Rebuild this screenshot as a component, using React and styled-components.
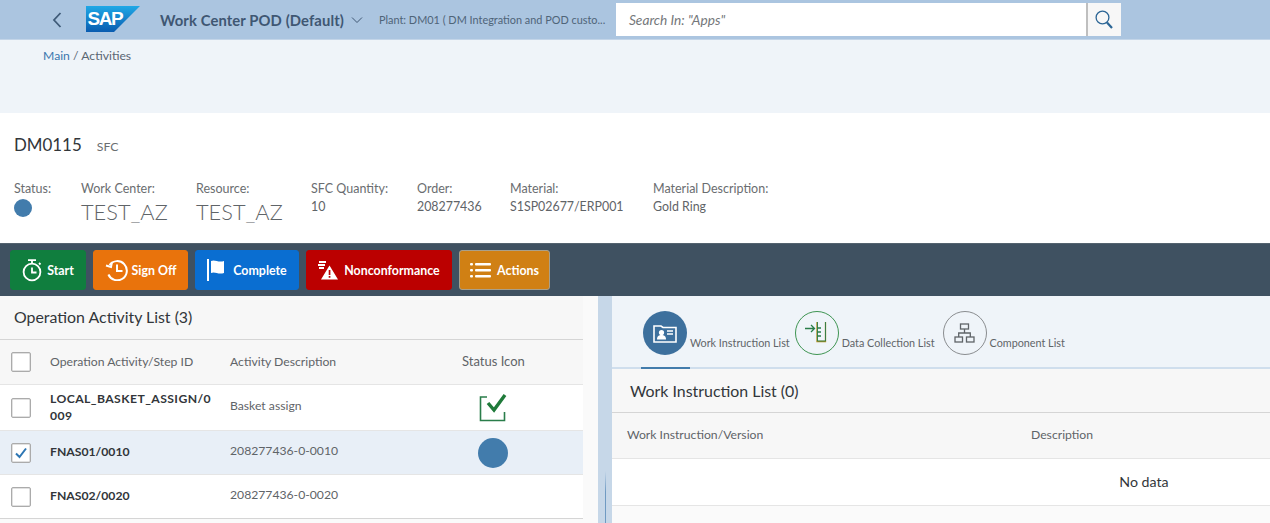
import React from "react";
import styled, { createGlobalStyle } from "styled-components";

const Global = createGlobalStyle`
  html, body { margin: 0; padding: 0; background: #fff; }
  body { font-family: "Lato", "Open Sans", Arial, sans-serif; color: #32363a; overflow: hidden; }
  * { box-sizing: border-box; }
`;
const Page = styled.div`width:1270px;height:523px;overflow:hidden;display:flex;flex-direction:column;`;

const Shell = styled.header`height:40px;flex:none;background:#abc5e0;border-bottom:1px solid #c3d5e8;display:flex;align-items:center;`;
const BackBtn = styled.div`width:16px;margin-left:52px;height:20px;display:flex;align-items:center;color:#3f5b78;`;
const LogoWrap = styled.div`margin-left:18px;width:54px;height:26px;display:flex;margin-top:-1px;`;
const ShellTitle = styled.div`margin-left:20px;font-size:14.8px;font-weight:700;color:#3f5773;white-space:nowrap;letter-spacing:.1px;`;
const Chevron = styled.div`margin-left:7px;width:12px;display:flex;color:#3f5773;`;
const Plant = styled.div`margin-left:16px;width:229px;font-size:10.9px;color:#4f6478;white-space:nowrap;`;
const Search = styled.div`margin-left:8px;display:flex;height:33px;margin-top:-1px;`;
const SearchInput = styled.div`width:470px;background:#fff;display:flex;align-items:center;padding-left:13px;font-size:13.7px;font-style:italic;color:#74777a;`;
const SearchBtn = styled.div`width:35px;background:#f7f7f7;border-left:2px solid #bfbfbf;display:flex;align-items:center;justify-content:center;color:#2b6595;`;

const Crumbs = styled.nav`height:73px;flex:none;background:#eff4f9;padding:7px 0 0 43px;font-size:12.2px;line-height:17px;color:#5a6673;`;
const CrumbLink = styled.span`color:#3a77ae;`;

const ObjectHeader = styled.section`height:130px;flex:none;background:#fff;padding:20px 0 0 14px;`;
const TitleRow = styled.div`display:flex;align-items:baseline;gap:15px;`;
const Title = styled.div`font-size:16.9px;line-height:24px;color:#32363a;`;
const Sub = styled.div`font-size:12.3px;color:#6a6d70;`;
const Attrs = styled.div`display:flex;margin-top:23px;`;
const Attr = styled.div`width:${p => p.$w}px;flex:none;`;
const Label = styled.div`font-size:12.5px;line-height:17px;color:#6a6d70;white-space:nowrap;`;
const Big = styled.div`font-size:21.8px;line-height:28px;font-weight:300;color:#5f6468;margin-top:1px;white-space:nowrap;`;
const Val = styled.div`font-size:12.4px;line-height:17px;color:#5f6468;margin-top:1px;white-space:nowrap;`;
const Dot = styled.div`width:${p => p.$s}px;height:${p => p.$s}px;border-radius:50%;background:#427cac;margin-top:${p => p.$mt || 0}px;`;

const Toolbar = styled.div`height:53px;flex:none;background:#3f5161;border-top:1px solid #54636f;display:flex;align-items:center;gap:7px;padding:0 0 1px 10px;`;
const Action = styled.div`height:40px;width:${p => p.$w}px;flex:none;background:${p => p.$bg};border-radius:3px;border:1px solid ${p => p.$line || p.$bg};color:#fff;font-size:12.4px;font-weight:700;display:flex;align-items:center;justify-content:center;gap:${p => p.$gap || 5}px;white-space:nowrap;padding-top:1px;`;

const Panes = styled.div`flex:1;display:flex;min-height:0;`;
const Left = styled.section`width:583px;flex:none;display:flex;flex-direction:column;background:#fff;`;
const Gutter = styled.div`width:15px;flex:none;background:#fafafa;`;
const Splitter = styled.div`width:14px;flex:none;background:#c6d7e8;display:flex;justify-content:center;padding-top:175px;`;
const SplitLine = styled.div`width:1px;height:52px;background:linear-gradient(#c6d7e8,#6f9ac2 40%,#6f9ac2);`;
const Right = styled.section`flex:1;display:flex;flex-direction:column;background:#fafafa;`;

const ListTitle = styled.div`height:44px;flex:none;background:#f7f7f7;border-bottom:1px solid #d5d5d5;padding:0 0 3px 14px;display:flex;align-items:center;font-size:15.9px;color:#32363a;`;
const Row = styled.div`height:${p => p.$h}px;flex:none;display:grid;grid-template-columns:50px 180px 232px 62px 1fr;align-items:center;background:${p => p.$bg || "#fff"};border-bottom:1px solid ${p => p.$line || "#e5e5e5"};`;
const CheckCell = styled.div`padding-left:11px;display:flex;`;
const Check = styled.div`width:20px;height:20px;background:#fff;border:1px solid #ababab;border-radius:2px;box-shadow:inset 0 0 0 .5px #c4c4c4;display:flex;align-items:center;justify-content:center;`;
const HeadCell = styled.div`font-size:${p => p.$c ? 13 : 12.2}px;color:#5f6468;white-space:nowrap;margin-top:-2px;text-align:${p => p.$c ? "center" : "left"};`;
const IdCell = styled.div`font-size:12.2px;line-height:17px;font-weight:700;color:#32363a;width:166px;word-break:break-all;letter-spacing:${p => p.$ls || 0}px;margin-top:-2px;`;
const TextCell = styled.div`font-size:12.2px;color:#5f6468;margin-top:${p => p.$mt || 0}px;`;
const IconCell = styled.div`display:flex;justify-content:center;`;
const Bottom = styled.div`flex:1;background:#fafafa;`;

const Tabs = styled.div`height:73px;flex:none;background:#eff4f9;border-bottom:2px solid #cfdeed;display:flex;padding-left:31px;`;
const Tab = styled.div`display:flex;align-items:flex-start;padding-top:15px;margin-right:${p => p.$mr}px;height:73px;position:relative;`;
const TabCircle = styled.div`width:44px;height:44px;border-radius:50%;flex:none;display:flex;align-items:center;justify-content:center;background:${p => p.$bg || "transparent"};border:${p => p.$bd ? `1px solid ${p.$bd}` : "none"};`;
const TabText = styled.div`margin:25px 0 0 3px;font-size:10.8px;line-height:14px;color:#5f6468;white-space:nowrap;`;
const TabBar = styled.div`position:absolute;left:-2px;width:49px;bottom:0;height:2px;background:#427cac;`;

const WiTitle = styled.div`height:44px;flex:none;background:#f7f7f7;border-bottom:1px solid #d5d5d5;padding-left:18px;display:flex;align-items:center;font-size:15.9px;color:#32363a;`;
const WiHead = styled.div`height:46px;flex:none;background:#f7f7f7;border-bottom:1px solid #e5e5e5;display:grid;grid-template-columns:404px 1fr;padding:0 0 2px 15px;align-items:center;font-size:12.2px;color:#5f6468;`;
const NoData = styled.div`height:47px;flex:none;background:#fff;border-bottom:1px solid #e5e5e5;display:flex;align-items:center;justify-content:center;padding:0 0 1px 406px;font-size:14.2px;color:#32363a;`;

const Logo = () => (
  <svg width="54" height="26" viewBox="0 0 54 26">
    <defs>
      <linearGradient id="sapg" x1="0" y1="0" x2="0" y2="1">
        <stop offset="0" stopColor="#1fa8e6" />
        <stop offset="1" stopColor="#0a5cb0" />
      </linearGradient>
    </defs>
    <path d="M0 0H54L28 26H0Z" fill="url(#sapg)" />
    <text x="1.5" y="19" fontFamily="'Liberation Sans',Arial,sans-serif" fontWeight="700" fontSize="19" letterSpacing="-1.4" fill="#fff">SAP</text>
  </svg>
);
const Stopwatch = () => (
  <svg width="20" height="24" viewBox="0 0 20 24" fill="none" stroke="#fff" strokeWidth="1.8">
    <circle cx="10" cy="14" r="8.4" />
    <path d="M6 2.2h8M10 2.2v3.4M10 9.5v5h4.5M17 5l1.5 1.5" />
  </svg>
);
const History = () => (
  <svg width="23" height="22" viewBox="0 0 23 22" fill="none" stroke="#fff" strokeWidth="2">
    <path d="M4.5 6A9.6 9.6 0 1 1 3.4 15.5" />
    <path d="M1 6.5l5 1.5 1-5" />
    <path d="M12 5.5v6.5h5.5" />
  </svg>
);
const Flag = () => (
  <svg width="18" height="22" viewBox="0 0 18 22" fill="#fff">
    <rect x="0" y="0" width="2" height="22" />
    <path d="M4 2c4-2 7 2 13 0v12c-6 2-9-2-13 0Z" />
  </svg>
);
const Nonconf = () => (
  <svg width="20" height="20" viewBox="0 0 20 20" fill="#fff">
    <rect x="1" y="1" width="7" height="2" />
    <rect x="0" y="4" width="7" height="2" />
    <rect x="1" y="7" width="5" height="2" />
    <path fillRule="evenodd" d="M11.5 5.5L20 19.5H3ZM10.7 10v5h1.7v-5ZM10.7 16v1.7h1.7V16Z" />
  </svg>
);
const ListIcon = () => (
  <svg width="21" height="16" viewBox="0 0 21 16" fill="#fff">
    <rect x="0" y="1" width="3" height="2.4" rx="1" />
    <rect x="5" y="1" width="16" height="2.4" rx="1" />
    <rect x="0" y="7" width="3" height="2.4" rx="1" />
    <rect x="5" y="7" width="16" height="2.4" rx="1" />
    <rect x="0" y="13" width="3" height="2.4" rx="1" />
    <rect x="5" y="13" width="16" height="2.4" rx="1" />
  </svg>
);
const Tick = ({ s = 14 }) => (
  <svg width={s} height={s} viewBox="0 0 14 14" fill="none" stroke="#2d76b4" strokeWidth="2">
    <path d="M2 7.5l3.5 3.5L12 2.5" />
  </svg>
);
const DoneIcon = () => (
  <svg width="28" height="28" viewBox="0 0 28 28" fill="none">
    <path d="M8 3H1.5v23.5h24V18" stroke="#2a7d4a" strokeWidth="1.6" />
    <path d="M9 9l6 7L26 1" stroke="#1f7a3a" strokeWidth="3.4" />
  </svg>
);
const WiIcon = () => (
  <svg width="24" height="20" viewBox="0 0 24 20" fill="none">
    <path d="M1 3h7l2 1.5h13V19H1Z" stroke="#fff" strokeWidth="1.6" />
    <circle cx="8.5" cy="9.5" r="2.6" fill="#fff" />
    <path d="M4 16.5c0-3.4 2-4.4 4.5-4.4s4.5 1 4.5 4.4Z" fill="#fff" />
    <path d="M14 8h6M14 11h6" stroke="#fff" strokeWidth="1.4" />
  </svg>
);
const DcIcon = () => (
  <svg width="24" height="24" viewBox="0 0 24 24" fill="none">
    <path d="M0 7.5h9M6 4l3.5 3.5L6 11" stroke="#2a7d4a" strokeWidth="1.3" />
    <path d="M12 1v19.5h8.5V1" stroke="#b08d1e" strokeWidth="1.3" />
    <path d="M12.5 1v19h8V1" stroke="#2a7d4a" strokeWidth=".9" />
    <path d="M12 7h4M12 11h4M12 15h4" stroke="#2a7d4a" strokeWidth="1.3" />
  </svg>
);
const CompIcon = () => (
  <svg width="21" height="21" viewBox="0 0 21 21" fill="none" stroke="#5f6468" strokeWidth="1.3">
    <rect x="6.5" y="1" width="8" height="5" />
    <rect x="1" y="14" width="7.5" height="5" />
    <rect x="12.5" y="14" width="7.5" height="5" />
    <path d="M10.5 6v4M4.7 14v-4h11.6v4" />
  </svg>
);

export default function App() {
  return (
    <Page>
      <Global />
      <Shell>
        <BackBtn>
          <svg width="10" height="16" viewBox="0 0 10 16" fill="none" stroke="currentColor" strokeWidth="1.8"><path d="M8.5 1L2 8l6.5 7" /></svg>
        </BackBtn>
        <LogoWrap><Logo /></LogoWrap>
        <ShellTitle>Work Center POD (Default)</ShellTitle>
        <Chevron>
          <svg width="12" height="8" viewBox="0 0 12 8" fill="none" stroke="currentColor" strokeWidth="1"><path d="M1 1.5l5 5 5-5" /></svg>
        </Chevron>
        <Plant>Plant: DM01 ( DM Integration and POD custo...</Plant>
        <Search>
          <SearchInput>Search In: "Apps"</SearchInput>
          <SearchBtn>
            <svg width="18" height="19" viewBox="0 0 18 19" fill="none" stroke="currentColor"><circle cx="7.5" cy="7.5" r="6.4" strokeWidth="1.3" /><path d="M12 12.5l5 5.5" strokeWidth="2.2" /></svg>
          </SearchBtn>
        </Search>
      </Shell>
      <Crumbs><CrumbLink>Main</CrumbLink> / Activities</Crumbs>
      <ObjectHeader>
        <TitleRow><Title>DM0115</Title><Sub>SFC</Sub></TitleRow>
        <Attrs>
          <Attr $w={67}><Label>Status:</Label><Dot $s={18} $mt={2} /></Attr>
          <Attr $w={115}><Label>Work Center:</Label><Big>TEST_AZ</Big></Attr>
          <Attr $w={115}><Label>Resource:</Label><Big>TEST_AZ</Big></Attr>
          <Attr $w={106}><Label>SFC Quantity:</Label><Val>10</Val></Attr>
          <Attr $w={93}><Label>Order:</Label><Val>208277436</Val></Attr>
          <Attr $w={143}><Label>Material:</Label><Val>S1SP02677/ERP001</Val></Attr>
          <Attr $w={130}><Label>Material Description:</Label><Val>Gold Ring</Val></Attr>
        </Attrs>
      </ObjectHeader>
      <Toolbar>
        <Action $w={76} $bg="#107e3e"><Stopwatch />Start</Action>
        <Action $w={95} $bg="#e9730c" $gap={4}><History />Sign Off</Action>
        <Action $w={104} $bg="#0a6ed1" $gap={8}><Flag />Complete</Action>
        <Action $w={146} $bg="#bb0000" $gap={6}><Nonconf />Nonconformance</Action>
        <Action $w={91} $bg="#d08014" $line="#a9a08a" $gap={6}><ListIcon />Actions</Action>
      </Toolbar>
      <Panes>
        <Left>
          <ListTitle>Operation Activity List (3)</ListTitle>
          <Row $h={45} $bg="#f7f7f7">
            <CheckCell><Check /></CheckCell>
            <HeadCell>Operation Activity/Step ID</HeadCell>
            <HeadCell>Activity Description</HeadCell>
            <HeadCell $c>Status Icon</HeadCell>
          </Row>
          <Row $h={46}>
            <CheckCell><Check /></CheckCell>
            <IdCell $ls={0.42}>LOCAL_BASKET_ASSIGN/0009</IdCell>
            <TextCell $mt={-4}>Basket assign</TextCell>
            <IconCell><DoneIcon /></IconCell>
          </Row>
          <Row $h={44} $bg="#e8eff7">
            <CheckCell><Check><Tick /></Check></CheckCell>
            <IdCell>FNAS01/0010</IdCell>
            <TextCell $mt={-5}>208277436-0-0010</TextCell>
            <IconCell><Dot $s={30} /></IconCell>
          </Row>
          <Row $h={44} $line="#d5d5d5">
            <CheckCell><Check /></CheckCell>
            <IdCell>FNAS02/0020</IdCell>
            <TextCell $mt={-5}>208277436-0-0020</TextCell>
          </Row>
          <Bottom />
        </Left>
        <Gutter />
        <Splitter><SplitLine /></Splitter>
        <Right>
          <Tabs>
            <Tab $mr={5}>
              <TabCircle $bg="#3d709d"><WiIcon /></TabCircle>
              <TabText>Work Instruction List</TabText>
              <TabBar />
            </Tab>
            <Tab $mr={8}>
              <TabCircle $bd="#3f9553"><DcIcon /></TabCircle>
              <TabText>Data Collection List</TabText>
            </Tab>
            <Tab $mr={0}>
              <TabCircle $bd="#8a8d90"><CompIcon /></TabCircle>
              <TabText>Component List</TabText>
            </Tab>
          </Tabs>
          <WiTitle>Work Instruction List (0)</WiTitle>
          <WiHead><div>Work Instruction/Version</div><div>Description</div></WiHead>
          <NoData>No data</NoData>
          <Bottom />
        </Right>
      </Panes>
    </Page>
  );
}
